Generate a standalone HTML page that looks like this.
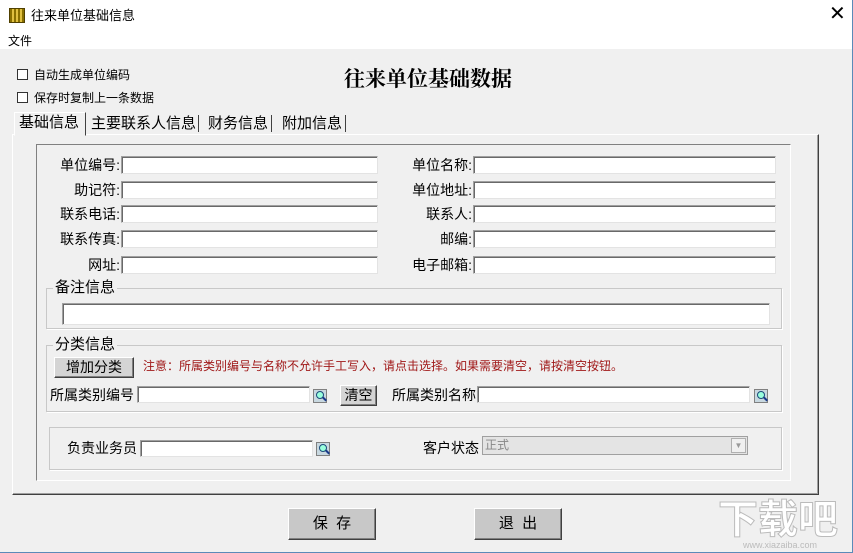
<!DOCTYPE html><html><head><meta charset="utf-8"><style>
*{margin:0;padding:0;box-sizing:border-box}
body{width:853px;height:553px;background:#f0f0f0;font-family:"Liberation Sans","Noto Sans CJK SC",sans-serif;font-size:14px;color:#000;position:relative;overflow:hidden}
.a{position:absolute;white-space:nowrap;line-height:16px}
.in{position:absolute;background:#fff;border:1px solid #a0a0a0;border-right-color:#e3e3e3;border-bottom-color:#e3e3e3;box-shadow:inset 1px 1px 0 #696969}
.btn{position:absolute;background:#d4d4d4;border:1px solid;border-color:#fff #404040 #404040 #fff;box-shadow:inset -1px -1px 0 #808080;text-align:center}
.grp{position:absolute;border:1px solid #c8c8c8;box-shadow:1px 1px 0 #fff}
.ic{position:absolute;width:14px;height:14px;background:#c8d8e0;border:1px solid #808080}
.ic:after{content:"";position:absolute;left:2px;top:1px;width:6px;height:6px;border-radius:50%;border:1px solid #1a4a7a;background:#9fd}
.ic:before{content:"";position:absolute;left:8px;top:8px;width:5px;height:2px;background:#1a3a8a;transform:rotate(45deg)}
.cb{position:absolute;width:11px;height:11px;border:1px solid #333;background:#fff}
.r{text-align:right}
</style></head><body>
<div class="a" style="left:0;top:0;width:853px;height:49px;background:#fff"></div>
<div class="a" style="left:9px;top:8px;width:16px;height:15px;background:repeating-linear-gradient(90deg,#8a7000 0 2px,#e0c040 2px 4px);border:1px solid #504000"></div>
<div class="a" style="left:31px;top:8px;font-size:13px">往来单位基础信息</div>
<div class="a" style="left:829px;top:3px;font-size:20px;line-height:22px">✕</div>
<div class="a" style="left:8px;top:33px;font-size:12px">文件</div>
<div class="a" style="left:852px;top:0;width:1px;height:553px;background:#5a8ab8"></div>
<div class="a" style="left:0;top:552px;width:853px;height:1px;background:#5a8ab8"></div>
<div class="cb" style="left:17px;top:69px"></div><div class="a" style="left:34px;top:67px;font-size:12px">自动生成单位编码</div>
<div class="cb" style="left:17px;top:92px"></div><div class="a" style="left:34px;top:90px;font-size:12px">保存时复制上一条数据</div>
<div class="a" style="left:344px;top:66px;font-size:21px;line-height:24px;font-weight:bold;font-family:'Noto Serif CJK SC',serif">往来单位基础数据</div>
<div class="a" style="left:12px;top:134px;width:807px;height:361px;border:1px solid;border-color:#fff #404040 #404040 #fff;box-shadow:inset -1px -1px 0 #a0a0a0"></div>
<div class="a" style="left:14px;top:112px;width:72px;height:24px;background:#f0f0f0;border:1px solid;border-color:#fff #404040 #f0f0f0 #fff;padding:2px 4px;font-size:15px">基础信息</div>
<div class="a" style="left:91px;top:115px;font-size:15px;padding-top:1px;border-right:1px solid #404040;padding-right:2px">主要联系人信息</div>
<div class="a" style="left:208px;top:115px;font-size:15px;padding-top:1px;border-right:1px solid #404040;padding-right:3px">财务信息</div>
<div class="a" style="left:282px;top:115px;font-size:15px;padding-top:1px;border-right:1px solid #404040;padding-right:3px">附加信息</div>
<div class="a" style="left:36px;top:144px;width:755px;height:337px;border:1px solid;border-color:#808080 #fff #fff #808080"></div>
<div class="a r" style="left:20px;width:100px;top:157px">单位编号:</div><div class="in" style="left:121px;top:156px;width:257px;height:18px"></div>
<div class="a r" style="left:20px;width:100px;top:182px">助记符:</div><div class="in" style="left:121px;top:181px;width:257px;height:18px"></div>
<div class="a r" style="left:20px;width:100px;top:206px">联系电话:</div><div class="in" style="left:121px;top:205px;width:257px;height:18px"></div>
<div class="a r" style="left:20px;width:100px;top:231px">联系传真:</div><div class="in" style="left:121px;top:230px;width:257px;height:18px"></div>
<div class="a r" style="left:20px;width:100px;top:257px">网址:</div><div class="in" style="left:121px;top:256px;width:257px;height:18px"></div>
<div class="a r" style="left:372px;width:100px;top:157px">单位名称:</div><div class="in" style="left:473px;top:156px;width:303px;height:18px"></div>
<div class="a r" style="left:372px;width:100px;top:182px">单位地址:</div><div class="in" style="left:473px;top:181px;width:303px;height:18px"></div>
<div class="a r" style="left:372px;width:100px;top:206px">联系人:</div><div class="in" style="left:473px;top:205px;width:303px;height:18px"></div>
<div class="a r" style="left:372px;width:100px;top:231px">邮编:</div><div class="in" style="left:473px;top:230px;width:303px;height:18px"></div>
<div class="a r" style="left:372px;width:100px;top:257px">电子邮箱:</div><div class="in" style="left:473px;top:256px;width:303px;height:18px"></div>
<div class="grp" style="left:46px;top:288px;width:736px;height:41px"></div>
<div class="a" style="left:53px;top:280px;background:#f0f0f0;font-size:15px;padding:0 2px">备注信息</div>
<div class="in" style="left:62px;top:303px;width:708px;height:22px"></div>
<div class="grp" style="left:46px;top:345px;width:736px;height:67px"></div>
<div class="a" style="left:53px;top:337px;background:#f0f0f0;font-size:15px;padding:0 2px">分类信息</div>
<div class="btn" style="left:54px;top:357px;width:80px;height:21px;line-height:18px">增加分类</div>
<div class="a" style="left:143px;top:358px;color:#a01818;font-size:12px">注意：所属类别编号与名称不允许手工写入，请点击选择。如果需要清空，请按清空按钮。</div>
<div class="a" style="left:50px;top:387px">所属类别编号</div><div class="in" style="left:137px;top:386px;width:173px;height:17px"></div><div class="ic" style="left:313px;top:389px"></div>
<div class="btn" style="left:340px;top:385px;width:37px;height:21px;line-height:18px">清空</div>
<div class="a" style="left:392px;top:387px">所属类别名称</div><div class="in" style="left:477px;top:386px;width:273px;height:17px"></div><div class="ic" style="left:754px;top:389px"></div>
<div class="grp" style="left:49px;top:427px;width:733px;height:43px"></div>
<div class="a" style="left:67px;top:440px">负责业务员</div><div class="in" style="left:140px;top:440px;width:173px;height:17px"></div><div class="ic" style="left:316px;top:442px"></div>
<div class="a" style="left:423px;top:440px">客户状态</div>
<div class="a" style="left:482px;top:436px;width:266px;height:19px;background:#e4e4e4;border:1px solid #a0a0a0;color:#888;font-size:12px;padding-left:2px;line-height:17px">正式</div>
<div class="a" style="left:731px;top:438px;width:15px;height:15px;border:1px solid #b0b0b0;background:#f0f0f0;color:#999;font-size:8px;text-align:center;line-height:14px">▼</div>
<div class="btn" style="left:288px;top:508px;width:88px;height:32px;line-height:29px;font-size:15px;background:#c8c8c8">保&nbsp;&nbsp;存</div>
<div class="btn" style="left:474px;top:508px;width:88px;height:32px;line-height:29px;font-size:15px;background:#c8c8c8">退&nbsp;&nbsp;出</div>
<div class="a" style="left:718px;top:498px;font-size:40px;line-height:44px;color:#fff;-webkit-text-stroke:1px #bbb;font-weight:bold">下载吧</div>
<div class="a" style="left:743px;top:540px;font-size:9px;line-height:10px;color:#bbb">www.xiazaiba.com</div>
</body></html>
